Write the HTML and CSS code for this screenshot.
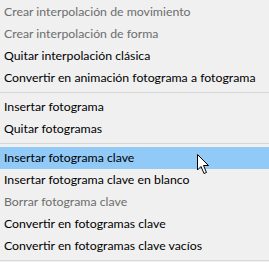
FILE: index.html
```html
<!DOCTYPE html>
<html>
<head>
<meta charset="utf-8">
<link rel="stylesheet" href="styles.css">
</head>
<body>
<div class="menu">
  <div class="item disabled">Crear interpolación de movimiento</div>
  <div class="item disabled">Crear interpolación de forma</div>
  <div class="item">Quitar interpolación clásica</div>
  <div class="item">Convertir en animación fotograma a fotograma</div>
  <div class="sep"></div>
  <div class="item">Insertar fotograma</div>
  <div class="item">Quitar fotogramas</div>
  <div class="sep"></div>
  <div class="item active">Insertar fotograma clave
    <svg class="cursor" width="14" height="22" viewBox="0 0 14 22">
      <path d="M1.5 1.5 L1.5 17 L5 13.5 L8 20.5 L10.5 19.5 L7.5 12.5 L12.5 12.5 Z" fill="#fff" stroke="#000" stroke-width="1" stroke-linejoin="round"/>
    </svg>
  </div>
  <div class="item">Insertar fotograma clave en blanco</div>
  <div class="item disabled">Borrar fotograma clave</div>
  <div class="item">Convertir en fotogramas clave</div>
  <div class="item">Convertir en fotogramas clave vacíos</div>
</div>
</body>
</html>
```
FILE: styles.css
```css
html, body {
  margin: 0;
  padding: 0;
  background: #f0f0f0;
}
.menu {
  width: 269px;
  height: 262px;
  box-sizing: border-box;
  padding-top: 1px;
  background: #f0f0f0;
  font-family: Lato, "Noto Sans", sans-serif;
  font-size: 12.3px;
  color: #000;
  position: relative;
  display: flex;
  flex-direction: column;
}
.menu::after {
  content: "";
  position: absolute;
  left: 0;
  right: 0;
  top: 260px;
  height: 1px;
  background: #d9d9d9;
}
.item {
  height: 22px;
  line-height: 21px;
  padding-left: 4px;
  white-space: nowrap;
  position: relative;
}
.item.disabled {
  color: #6d6d6d;
}
.item.active {
  background: #91c9f7;
}
.sep {
  height: 7px;
  position: relative;
}
.sep::before {
  content: "";
  position: absolute;
  left: 0;
  right: 0;
  top: 3px;
  height: 1px;
  background: #d7d7d7;
}
.cursor {
  position: absolute;
  left: 196px;
  top: 6px;
}
```
